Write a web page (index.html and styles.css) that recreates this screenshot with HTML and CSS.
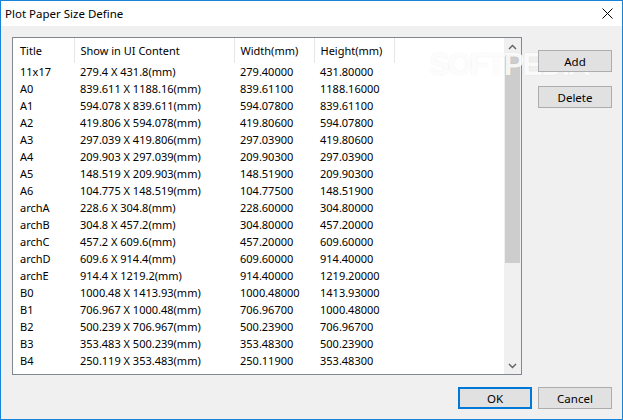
FILE: index.html
```html
<!DOCTYPE html>
<html lang="en">
<head>
    <meta charset="UTF-8">
    <title>Plot Paper Size Define</title>
    <link rel="stylesheet" href="styles.css">
</head>
<body>
    <div class="window">
        <div class="titlebar">
            <span class="title">Plot Paper Size Define</span>
            <svg class="close" width="11" height="11" viewBox="0 0 11 11">
                <path d="M0.5 0.5 L10.5 10.5 M10.5 0.5 L0.5 10.5" stroke="#000" stroke-width="1" fill="none"/>
            </svg>
        </div>

        <div class="content">
            <div class="main">
                <div class="listbox">
                    <div class="list-view">
                        <table class="grid">
                            <thead>
                                <tr>
                                    <th class="col-title">Title</th>
                                    <th class="col-show">Show in UI Content</th>
                                    <th class="col-num">Width(mm)</th>
                                    <th class="col-num">Height(mm)</th>
                                    <th class="col-rest"></th>
                                </tr>
                            </thead>
                            <tbody id="rows"></tbody>
                        </table>
                    </div>
                    <div class="scrollbar">
                        <div class="arrow">
                            <svg width="9" height="6" viewBox="0 0 9 6"><path d="M1 5 L4.5 1.5 L8 5" stroke="#606060" stroke-width="1.4" fill="none"/></svg>
                        </div>
                        <div class="track"><div class="thumb"></div></div>
                        <div class="arrow">
                            <svg width="9" height="6" viewBox="0 0 9 6"><path d="M1 1 L4.5 4.5 L8 1" stroke="#606060" stroke-width="1.4" fill="none"/></svg>
                        </div>
                    </div>
                </div>
                <div class="side-buttons">
                    <button class="btn">Add</button>
                    <button class="btn">Delete</button>
                </div>
            </div>
            <div class="footer">
                <button class="btn default">OK</button>
                <button class="btn">Cancel</button>
            </div>
        </div>

        <div class="watermark">SOFTPEDIA<span class="reg">®</span></div>
    </div>

    <script>
        // paper sizes shown in the list
        const papers = [
            ['11x17', '279.4 X 431.8(mm)', '279.40000', '431.80000'],
            ['A0', '839.611 X 1188.16(mm)', '839.61100', '1188.16000'],
            ['A1', '594.078 X 839.611(mm)', '594.07800', '839.61100'],
            ['A2', '419.806 X 594.078(mm)', '419.80600', '594.07800'],
            ['A3', '297.039 X 419.806(mm)', '297.03900', '419.80600'],
            ['A4', '209.903 X 297.039(mm)', '209.90300', '297.03900'],
            ['A5', '148.519 X 209.903(mm)', '148.51900', '209.90300'],
            ['A6', '104.775 X 148.519(mm)', '104.77500', '148.51900'],
            ['archA', '228.6 X 304.8(mm)', '228.60000', '304.80000'],
            ['archB', '304.8 X 457.2(mm)', '304.80000', '457.20000'],
            ['archC', '457.2 X 609.6(mm)', '457.20000', '609.60000'],
            ['archD', '609.6 X 914.4(mm)', '609.60000', '914.40000'],
            ['archE', '914.4 X 1219.2(mm)', '914.40000', '1219.20000'],
            ['B0', '1000.48 X 1413.93(mm)', '1000.48000', '1413.93000'],
            ['B1', '706.967 X 1000.48(mm)', '706.96700', '1000.48000'],
            ['B2', '500.239 X 706.967(mm)', '500.23900', '706.96700'],
            ['B3', '353.483 X 500.239(mm)', '353.48300', '500.23900'],
            ['B4', '250.119 X 353.483(mm)', '250.11900', '353.48300']
        ];

        const rowsBody = document.getElementById('rows');
        rowsBody.innerHTML = papers.map(p => `
            <tr>
                <td>${p[0]}</td>
                <td>${p[1]}</td>
                <td>${p[2]}</td>
                <td>${p[3]}</td>
                <td></td>
            </tr>
        `).join('');
    </script>
</body>
</html>
```

FILE: styles.css
```css
body {
    margin: 0;
    font-family: "Noto Sans", "Liberation Sans", sans-serif;
    font-size: 11px;
    color: #000;
}

.window {
    position: relative;
    width: 623px;
    height: 420px;
    box-sizing: border-box;
    border: 1px solid #1883d7;
    background: #f0f0f0;
    display: flex;
    flex-direction: column;
    overflow: hidden;
}

.titlebar {
    height: 25px;
    background: #fff;
    display: flex;
    align-items: center;
    justify-content: space-between;
    padding: 0 9px 0 4px;
}

.title {
    font-size: 11.5px;
}

.close {
    display: block;
    margin-top: -1px;
}

.content {
    flex: 1;
    padding: 11px 10px 0 11px;
}

.main {
    display: flex;
    align-items: flex-start;
}

.listbox {
    width: 510px;
    height: 338px;
    box-sizing: border-box;
    border: 1px solid #828790;
    background: #fff;
    display: flex;
}

.list-view {
    flex: 1;
    overflow: hidden;
}

.grid {
    border-collapse: collapse;
    table-layout: fixed;
    width: 100%;
}

.grid th {
    height: 25px;
    padding: 0 0 0 6px;
    text-align: left;
    font-weight: normal;
    border-right: 1px solid #e5e5e5;
    box-sizing: border-box;
    white-space: nowrap;
}

.grid th.col-rest {
    border-right: none;
}

.grid td {
    height: 17px;
    padding: 0 0 0 6px;
    line-height: 17px;
    white-space: nowrap;
}

.grid th:first-child,
.grid td:first-child {
    padding-left: 7px;
}

.col-title {
    width: 61px;
}

.col-show {
    width: 160px;
}

.col-num {
    width: 80px;
}

.scrollbar {
    width: 17px;
    background: #f0f0f0;
    display: flex;
    flex-direction: column;
}

.arrow {
    height: 17px;
    display: flex;
    align-items: center;
    justify-content: center;
}

.track {
    flex: 1;
}

.thumb {
    height: 208px;
    margin: 0 1px;
    background: #cdcdcd;
}

.side-buttons {
    margin: 13px 0 0 16px;
    display: flex;
    flex-direction: column;
    gap: 14px;
}

.btn {
    position: relative;
    z-index: 1;
    width: 74px;
    height: 22px;
    box-sizing: border-box;
    padding: 0;
    font-family: inherit;
    font-size: 11.5px;
    color: #000;
    background: #e1e1e1;
    border: 1px solid #adadad;
}

.btn.default {
    border: 2px solid #0078d7;
}

.footer {
    margin-top: 12px;
    display: flex;
    justify-content: flex-end;
    gap: 6px;
}

.watermark {
    position: absolute;
    left: 428px;
    top: 48px;
    font-family: "Liberation Sans", sans-serif;
    font-weight: bold;
    font-size: 31px;
    line-height: 31px;
    letter-spacing: -2px;
    color: rgba(255, 255, 255, 0.85);
    text-shadow: 0 0 2px rgba(0, 0, 0, 0.07);
    pointer-events: none;
}

.watermark .reg {
    font-size: 10px;
    vertical-align: top;
    margin-left: 3px;
    font-weight: normal;
}
```
